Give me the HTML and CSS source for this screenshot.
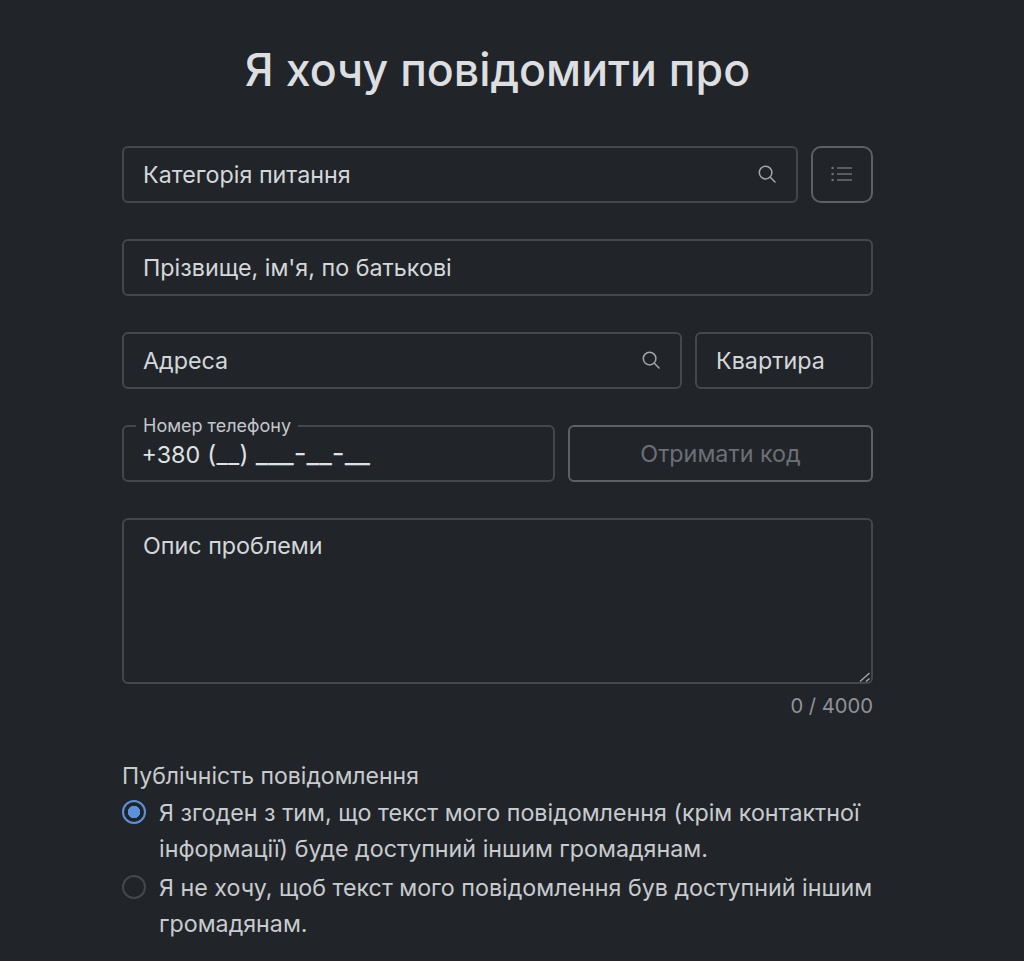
FILE: index.html
```html
<!DOCTYPE html>
<html lang="uk">
<head>
<meta charset="utf-8">
<title>Я хочу повідомити про</title>
<link rel="stylesheet" href="styles.css">
</head>
<body>
<main class="page">
  <h1 class="title">Я хочу повідомити про</h1>
  <form class="form">
    <div class="row">
      <div class="field grow">
        <span class="value">Категорія питання</span>
        <svg class="search" viewBox="0 0 20 20" aria-hidden="true"><circle cx="8.6" cy="8.6" r="6.3"/><path d="M13.3 13.3 18 18"/></svg>
      </div>
      <button type="button" class="icon-btn" aria-label="Список">
        <svg viewBox="0 0 22 16" aria-hidden="true"><path class="lines" d="M6 2h15M6 8h15M6 14h15"/><circle cx="1.6" cy="2" r="1.3"/><circle cx="1.6" cy="8" r="1.3"/><circle cx="1.6" cy="14" r="1.3"/></svg>
      </button>
    </div>
    <div class="row">
      <div class="field grow"><span class="value">Прізвище, ім'я, по батькові</span></div>
    </div>
    <div class="row">
      <div class="field grow">
        <span class="value">Адреса</span>
        <svg class="search" viewBox="0 0 20 20" aria-hidden="true"><circle cx="8.6" cy="8.6" r="6.3"/><path d="M13.3 13.3 18 18"/></svg>
      </div>
      <div class="field flat"><span class="value">Квартира</span></div>
    </div>
    <div class="row">
      <div class="field phone">
        <span class="notch">Номер телефону</span>
        <span class="phone-value">+380 <span class="mask">(__)</span> <span class="mask-rest">___-__-__</span></span>
      </div>
      <button type="button" class="code-btn" disabled>Отримати код</button>
    </div>
    <div class="message">
      <div class="area-wrap">
        <textarea class="area" placeholder="Опис проблеми"></textarea>
        <svg class="grip" viewBox="0 0 12 10" aria-hidden="true"><path d="M1 9.5 10.5 1M7 9.5 10.5 6.5"/></svg>
      </div>
      <div class="count">0 / 4000</div>
    </div>
    <fieldset class="group">
      <legend class="legend">Публічність повідомлення</legend>
      <label class="option">
        <span class="radio on"></span>
        <span>Я згоден з тим, що текст мого повідомлення (крім контактної інформації) буде доступний іншим громадянам.</span>
      </label>
      <label class="option">
        <span class="radio"></span>
        <span>Я не хочу, щоб текст мого повідомлення був доступний іншим громадянам.</span>
      </label>
    </fieldset>
  </form>
</main>
</body>
</html>
```

FILE: styles.css
```css
* { box-sizing: border-box; }
html, body { margin: 0; height: 100%; }
body {
  background: #212529;
  color: #d9dcdf;
  font-family: Inter, "Noto Sans", sans-serif;
  overflow: hidden;
}
.page { width: 751px; margin-left: 122px; }
.title {
  margin: 0;
  padding-top: 43px;
  height: 145.5px;
  font-size: 44.7px;
  line-height: 54px;
  font-weight: 500;
  text-align: center;
  color: #dcdee0;
}
.form { display: flex; flex-direction: column; }
.row { display: flex; gap: 13px; margin-bottom: 36px; height: 57px; }
.field {
  position: relative;
  display: flex;
  align-items: center;
  justify-content: space-between;
  padding: 0 19px;
  border: 2px solid #44484d;
  border-radius: 6px;
  font-size: 23.3px;
  color: #d4d7da;
}
.grow { flex: 1; }
.flat { width: 178px; }
.search { width: 20px; height: 20px; fill: none; stroke: #a3a6a9; stroke-width: 1.5; stroke-linecap: round; margin-right: 0.5px; }
.icon-btn {
  width: 62px;
  padding: 0;
  display: flex;
  align-items: center;
  justify-content: center;
  background: none;
  border: 2px solid #5d6166;
  border-radius: 10px;
}
.icon-btn svg { width: 22px; height: 16px; fill: #6c7075; }
.icon-btn .lines { fill: none; stroke: #6c7075; stroke-width: 1.5; }
.phone { width: 433px; align-items: flex-end; }
.notch {
  position: absolute;
  left: 12px;
  top: -11px;
  padding: 0 7px;
  background: #212529;
  font-size: 18px;
  line-height: 20px;
  color: #c4c7ca;
  white-space: nowrap;
}
.phone-value { font-size: 23.3px; line-height: 30px; padding-bottom: 10px; color: #dfe1e3; margin-left: -1.5px; word-spacing: 0.5px; }
.mask { font-size: 24.5px; letter-spacing: 0.3px; }
.mask-rest { font-size: 27.8px; line-height: 20px; }
.code-btn {
  flex: 1;
  background: none;
  border: 2px solid #5d6166;
  border-radius: 6px;
  font: inherit;
  font-size: 23.3px;
  color: #6c7075;
}
.message { display: flex; flex-direction: column; margin-bottom: 43px; }
.area-wrap { position: relative; }
.area {
  display: block;
  width: 100%;
  height: 166px;
  padding: 11px 19px;
  background: none;
  border: 2px solid #44484d;
  border-radius: 6px;
  font: inherit;
  font-size: 23.3px;
  line-height: 30px;
  color: #d4d7da;
  outline: none;
  resize: none;
}
.area::placeholder { color: #d4d7da; opacity: 1; }
.grip {
  position: absolute;
  right: 2px;
  bottom: 2px;
  width: 12px;
  height: 10px;
  fill: none;
  stroke: #a9acaf;
  stroke-width: 1.3;
}
.count { margin-top: 9px; text-align: right; font-size: 20.2px; line-height: 26px; color: #8f9397; }
.group { margin: 0; padding: 0; border: 0; min-width: 0; }
.legend { padding: 0; margin-bottom: 2px; font-size: 23px; line-height: 28px; color: #c8cbce; }
.option {
  display: flex;
  gap: 13px;
  margin-right: -4px;
  font-size: 23.25px;
  line-height: 36px;
  color: #c8cbce;
  margin-top: 3px;
}
.radio {
  flex: none;
  width: 24px;
  height: 24px;
  margin-top: 5px;
  border: 2px solid #44484d;
  border-radius: 50%;
}
.radio.on {
  border: 2px solid #5b92dc;
  background: radial-gradient(circle, #5b92dc 0 6px, #212529 6.5px);
}
```
